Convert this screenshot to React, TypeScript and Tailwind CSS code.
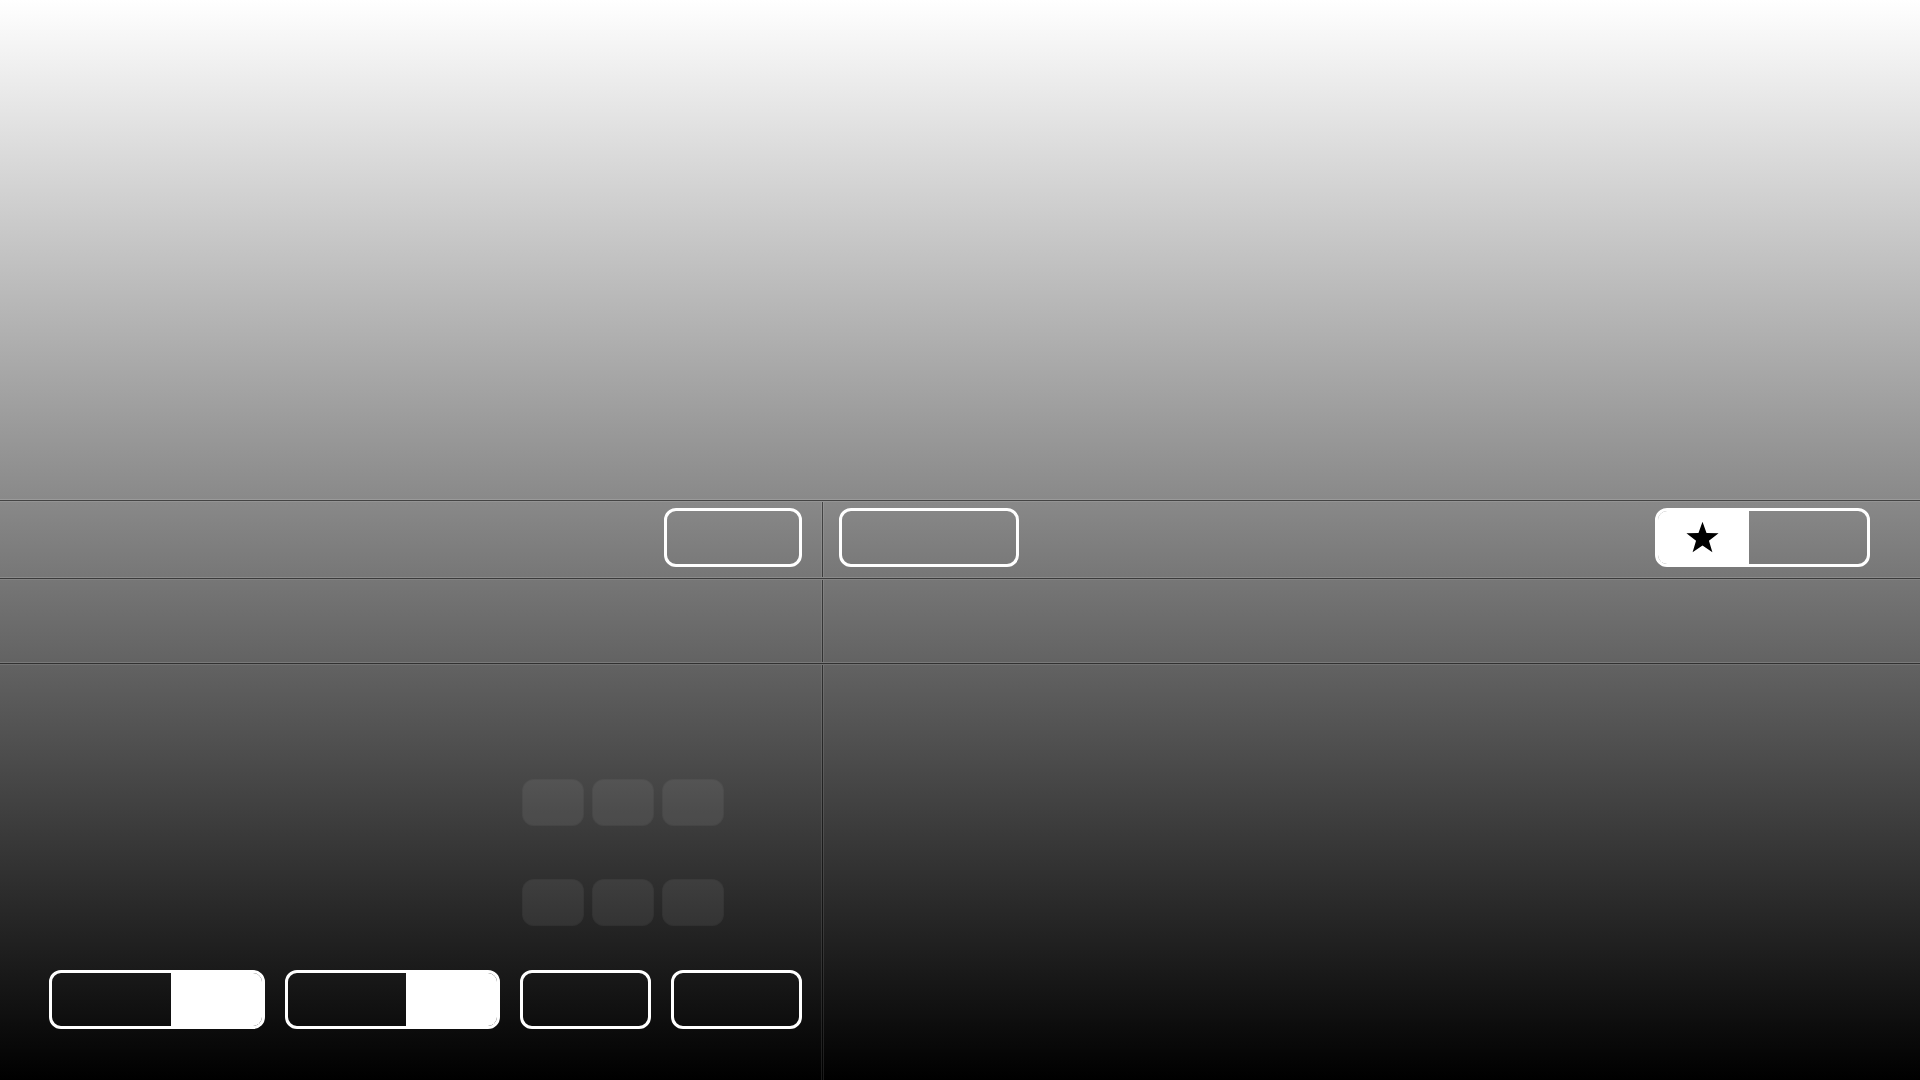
import React from 'react';

const Line = () => (
  <>
    <div className="h-px w-full bg-white/15" />
    <div className="h-px w-full bg-black/50" />
    <div className="h-px w-full bg-white/10" />
  </>
);

const Star = () => (
  <svg width="35" height="33" viewBox="0 0 24 23" className="block">
    <polygon
      points="12,0.5 14.8,8.4 23.2,8.6 16.5,13.7 18.9,21.8 12,17 5.1,21.8 7.5,13.7 0.8,8.6 9.2,8.4"
      fill="#000"
    />
  </svg>
);

// outlined button with a solid white segment on one side
const SplitButton = ({ width, fill, side, children }: { width: number; fill: number; side: 'left' | 'right'; children?: React.ReactNode }) => (
  <div
    className={`flex h-[59px] shrink-0 overflow-hidden rounded-[12px] border-[3px] border-white ${side === 'right' ? 'flex-row-reverse' : ''}`}
    style={{ width }}
  >
    <div className="flex h-full items-center justify-center bg-white pr-[3px]" style={{ width: fill }}>
      {children}
    </div>
    <div className="flex-1" />
  </div>
);

const OutlineButton = ({ width }: { width: number }) => (
  <div className="h-[59px] shrink-0 rounded-[12px] border-[3px] border-white" style={{ width }} />
);

const divider = 'border-r border-black/50 shadow-[inset_-1px_0_0_rgba(255,255,255,0.1),1px_0_0_rgba(255,255,255,0.1)]';

export default function App() {
  return (
    <div className="flex h-[1080px] w-full flex-col overflow-hidden bg-[linear-gradient(to_bottom,#ffffff,#000000)] font-['Liberation_Sans',sans-serif]">
      <div className="h-[499px] shrink-0" />
      <Line />

      {/* toolbar row */}
      <div className="flex h-[75px] shrink-0">
        <div className={`flex w-[823px] shrink-0 items-start justify-end pr-[20px] pt-[6px] ${divider}`}>
          <OutlineButton width={138} />
        </div>
        <div className="flex flex-1 items-start justify-between pl-[16px] pr-[50px] pt-[6px]">
          <OutlineButton width={180} />
          <SplitButton width={215} fill={91} side="left">
            <Star />
          </SplitButton>
        </div>
      </div>
      <Line />

      {/* empty row */}
      <div className="flex h-[82px] shrink-0">
        <div className={`w-[823px] shrink-0 ${divider}`} />
        <div className="flex-1" />
      </div>
      <Line />

      {/* content */}
      <div className="flex flex-1">
        <div className={`flex w-[823px] shrink-0 flex-col ${divider}`}>
          <div className="flex justify-end pr-[98px] pt-[114px]">
            <div className="grid grid-cols-3 gap-x-[8px] gap-y-[53px]">
              {Array.from({ length: 6 }).map((_, i) => (
                <div key={i} className="h-[47px] w-[62px] rounded-[12px] bg-white/[0.07] shadow-[inset_0_0_0_1px_rgba(0,0,0,0.06)]" />
              ))}
            </div>
          </div>
          <div className="flex gap-[20px] pl-[49px] pt-[44px]">
            <SplitButton width={216} fill={91} side="right" />
            <SplitButton width={215} fill={91} side="right" />
            <OutlineButton width={131} />
            <OutlineButton width={131} />
          </div>
        </div>
        <div className="flex-1" />
      </div>
    </div>
  );
}
